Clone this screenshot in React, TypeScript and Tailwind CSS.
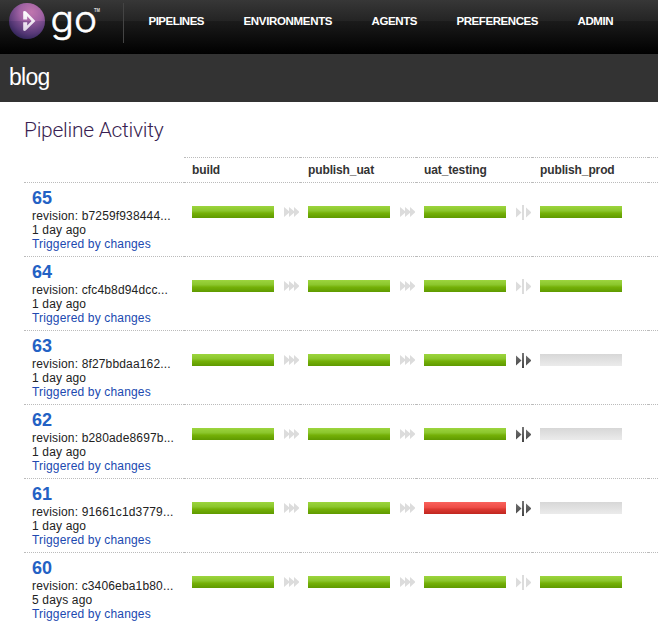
import React from "react";

type Status = "passed" | "failed" | "idle";
interface Run {
  label: string;
  revision: string;
  age: string;
  stages: Status[];
}

const P: Status = "passed";
const runs: Run[] = [
  { label: "65", revision: "b7259f938444...", age: "1 day ago", stages: [P, P, P, P] },
  { label: "64", revision: "cfc4b8d94dcc...", age: "1 day ago", stages: [P, P, P, P] },
  { label: "63", revision: "8f27bbdaa162...", age: "1 day ago", stages: [P, P, P, "idle"] },
  { label: "62", revision: "b280ade8697b...", age: "1 day ago", stages: [P, P, P, "idle"] },
  { label: "61", revision: "91661c1d3779...", age: "1 day ago", stages: [P, P, "failed", "idle"] },
  { label: "60", revision: "c3406eba1b80...", age: "5 days ago", stages: [P, P, P, P] },
];

const stageNames = ["build", "publish_uat", "uat_testing", "publish_prod"];

const nav = [
  { name: "PIPELINES", width: 56 },
  { name: "ENVIRONMENTS", width: 89 },
  { name: "AGENTS", width: 46 },
  { name: "PREFERENCES", width: 82 },
  { name: "ADMIN", width: 36 },
];

const barStyles: Record<Status, string> = {
  passed: "bg-[linear-gradient(#9cd53e_0%,#8bc62c_40%,#74b007_60%,#5f9a00_100%)]",
  failed: "bg-[linear-gradient(#fa625c_0%,#ee4d47_45%,#dc3932_60%,#c0261f_100%)]",
  idle: "bg-[linear-gradient(#d7d7d7,#ebebeb)]",
};

function Logo() {
  return (
    <svg width="124" height="54" viewBox="0 0 124 54" className="block shrink-0 overflow-visible">
      <defs>
        <radialGradient id="orb" cx="0.62" cy="0.25" r="0.8">
          <stop offset="0" stopColor="#c076ae" />
          <stop offset="0.4" stopColor="#a062a4" />
          <stop offset="0.75" stopColor="#64407f" />
          <stop offset="1" stopColor="#302555" />
        </radialGradient>
        <linearGradient id="mark" x1="0" y1="0" x2="0" y2="1">
          <stop offset="0" stopColor="#fff" />
          <stop offset="0.5" stopColor="#f2eaf4" />
          <stop offset="1" stopColor="#ddd3e4" />
        </linearGradient>
      </defs>
      <circle cx="27" cy="21" r="18" fill="url(#orb)" />
      <path d="M9 21H45A18 18 0 0 1 9 21Z" fill="#281e59" opacity="0.2" />
      <path
        fillRule="evenodd"
        fill="url(#mark)"
        d="M23.2 19.6V11.6Q24.6 10.2 26 11.6L35.4 20.9L26 30.3Q24.6 31.7 23.2 30.3V22.2H27.2V25.6L31.6 20.9L27.2 16.2V19.6Z"
      />
      <text x="50.5" y="32.2" fontFamily="Inter, sans-serif" fontWeight="300" fontSize="37" textLength="46.5" lengthAdjust="spacingAndGlyphs" fill="#fff" stroke="#fff" strokeWidth="0.5">go</text>
      <text x="94" y="12" fontFamily="Liberation Sans, sans-serif" fontSize="5" fontWeight="700" textLength="6" lengthAdjust="spacingAndGlyphs" fill="#ddd">TM</text>
      <path d="M123.5 3V43" stroke="#444" />
    </svg>
  );
}

function AutoArrow() {
  return (
    <svg width="15" height="10" viewBox="0 0 15 10" fill="#dcdcdc" className="ml-2.5 mt-6 block shrink-0">
      <path d="M0 0L6 5L0 10ZM5 0L11 5L5 10ZM10 0L15.5 5L10 10Z" />
    </svg>
  );
}

function ManualGate({ active }: { active: boolean }) {
  return (
    <svg width="15" height="15" viewBox="0 0 15 15" className="ml-2.5 mt-[22px] block shrink-0" fill={active ? "url(#gate)" : "#dcdcdc"}>
      <defs>
        <linearGradient id="gate" gradientUnits="userSpaceOnUse" x1="0" y1="0" x2="0" y2="15">
          <stop offset="0" stopColor="#777" />
          <stop offset="1" stopColor="#444" />
        </linearGradient>
      </defs>
      <path d="M0 2.5L5.5 7.5L0 12.5ZM6 0H8V15H6ZM10 2.5L15.5 7.5L10 12.5Z" />
    </svg>
  );
}

const dots = "border-t border-dotted border-[#bbb]";

export default function App() {
  return (
    <div className="h-[623px] w-[658px] overflow-hidden bg-white font-['Liberation_Sans',Arial,sans-serif] text-[12px] leading-[14px] text-[#222]">
      <header className="flex h-[54px] bg-[linear-gradient(#373737_0px,#242424_21px,#1b1b1b_21px,#000_54px)]">
        <Logo />
        <nav className="ml-[25px] flex gap-[39px] pt-3.5">
          {nav.map((n) => (
            <a key={n.name} className="block">
              <svg width={n.width} height="14" className="block overflow-visible">
                <text x="-0.5" y="11" fontSize="11.5" fontWeight="700" fill="#fff" textLength={n.width} lengthAdjust="spacing">{n.name}</text>
              </svg>
            </a>
          ))}
        </nav>
      </header>
      <div className="h-12 bg-[#333] pl-[9px] pt-[10px] text-[23px] leading-[26px] tracking-[-0.7px] text-white">blog</div>
      <main className="pl-6">
        <h1 className="h-[55px] pt-[15px] font-['Roboto',sans-serif] text-[21px] font-light leading-[26px] tracking-[-0.27px] text-[#3a1f52]">Pipeline Activity</h1>
        <div className="ml-40 flex h-[25px]">
          {stageNames.map((s) => (
            <div key={s} className={`w-[116px] shrink-0 pl-2 pt-[5px] font-bold tracking-[-0.12px] text-[#333] ${dots}`}>{s}</div>
          ))}
          <div className={`w-[10px] ${dots}`} />
        </div>
        {runs.map((run) => (
          <div key={run.label} className="flex h-[74px]">
            <div className={`w-40 shrink-0 whitespace-nowrap pl-2 pt-[5px] tracking-[0.16px] ${dots}`}>
              <div className="h-[21px] text-[18px] font-bold leading-5 tracking-normal text-[#2361c4]">{run.label}</div>
              <div>revision: {run.revision}</div>
              <div>{run.age}</div>
              <a className="block text-[#2049b0]">Triggered by changes</a>
            </div>
            {run.stages.map((status, i) => (
              <div key={i} className={`flex w-[116px] shrink-0 pl-2 ${dots}`}>
                <div className={`mt-[23px] h-3 w-[82px] shrink-0 ${barStyles[status]}`} />
                {i < 2 && <AutoArrow />}
                {i === 2 && <ManualGate active={run.stages[3] === "idle"} />}
              </div>
            ))}
            <div className={`w-[10px] ${dots}`} />
          </div>
        ))}
      </main>
    </div>
  );
}
